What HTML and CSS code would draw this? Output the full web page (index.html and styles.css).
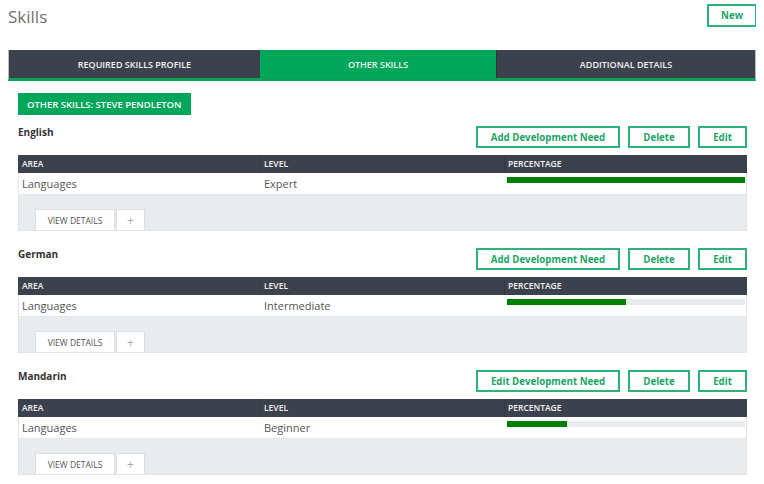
FILE: index.html
```html
<!DOCTYPE html>
<html>
<head>
<meta charset="utf-8">
<link rel="stylesheet" href="styles.css">
</head>
<body>
<div class="top">
  <h1 class="title">Skills</h1>
  <button class="btn btn-new">New</button>
</div>
<div class="tabs">
  <div class="tab tab-1">REQUIRED SKILLS PROFILE</div>
  <div class="tab tab-2 active">OTHER SKILLS</div>
  <div class="tab tab-3">ADDITIONAL DETAILS</div>
</div>
<div class="content">
  <div class="person">OTHER SKILLS: STEVE PENDLETON</div>

  <div class="skill">
    <div class="skill-head">
      <div class="skill-name">English</div>
      <div class="actions">
        <button class="btn btn-dev">Add Development Need</button>
        <button class="btn btn-del">Delete</button>
        <button class="btn btn-edit">Edit</button>
      </div>
    </div>
    <div class="table">
      <div class="row head"><div class="cell">AREA</div><div class="cell">LEVEL</div><div class="cell">PERCENTAGE</div></div>
      <div class="row body"><div class="cell">Languages</div><div class="cell">Expert</div><div class="cell bar-cell"><div class="bar"><div class="fill" style="width:100%"></div></div></div></div>
      <div class="foot"><button class="sm">VIEW DETAILS</button><button class="sm plus">+</button></div>
    </div>
  </div>

  <div class="skill">
    <div class="skill-head">
      <div class="skill-name">German</div>
      <div class="actions">
        <button class="btn btn-dev">Add Development Need</button>
        <button class="btn btn-del">Delete</button>
        <button class="btn btn-edit">Edit</button>
      </div>
    </div>
    <div class="table">
      <div class="row head"><div class="cell">AREA</div><div class="cell">LEVEL</div><div class="cell">PERCENTAGE</div></div>
      <div class="row body"><div class="cell">Languages</div><div class="cell">Intermediate</div><div class="cell bar-cell"><div class="bar"><div class="fill" style="width:50%"></div></div></div></div>
      <div class="foot"><button class="sm">VIEW DETAILS</button><button class="sm plus">+</button></div>
    </div>
  </div>

  <div class="skill">
    <div class="skill-head">
      <div class="skill-name">Mandarin</div>
      <div class="actions">
        <button class="btn btn-dev">Edit Development Need</button>
        <button class="btn btn-del">Delete</button>
        <button class="btn btn-edit">Edit</button>
      </div>
    </div>
    <div class="table">
      <div class="row head"><div class="cell">AREA</div><div class="cell">LEVEL</div><div class="cell">PERCENTAGE</div></div>
      <div class="row body"><div class="cell">Languages</div><div class="cell">Beginner</div><div class="cell bar-cell"><div class="bar"><div class="fill" style="width:25%"></div></div></div></div>
      <div class="foot"><button class="sm">VIEW DETAILS</button><button class="sm plus">+</button></div>
    </div>
  </div>
</div>
</body>
</html>
```
FILE: styles.css
```css
* { box-sizing: border-box; }
html, body { margin: 0; padding: 0; background: #fff; }
body {
  margin: 0 8px;
  font-family: "Open Sans", "Noto Sans", sans-serif;
  color: #444;
  overflow: hidden;
  height: 484px;
}
.top {
  display: flex;
  justify-content: space-between;
  align-items: flex-start;
  padding-top: 4px;
  height: 50px;
}
.title {
  margin: 1px 0 0 0;
  font-size: 17px;
  font-weight: 400;
  color: #707070;
  line-height: 24px;
}
.btn {
  font-family: inherit;
  background: #fff;
  border: 2px solid #2cb27a;
  color: #1ca566;
  font-weight: 700;
  font-size: 9.7px;
  height: 22px;
  padding: 0;
  cursor: pointer;
  white-space: nowrap;
}
.btn-new { width: 50px; height: 23px; margin-right: -1px; }
.tabs {
  display: flex;
  height: 31px;
  background: #3c424d;
  border-left: 1px solid #b9bdc3;
  border-right: 1px solid #b9bdc3;
  border-bottom: 3px solid #0ba25a;
}
.tab {
  display: flex;
  align-items: center;
  justify-content: center;
  color: #f2f2f2;
  font-size: 9px;
  font-weight: 600;
}
.tab-1 { width: 251px; }
.tab-2 { width: 236px; }
.tab-3 { flex: 1; border-left: 1px solid #2e333b; }
.tab.active { background: #00a65a; }
.content { padding: 12px 9px 0 10px; }
.person {
  display: flex;
  align-items: center;
  width: fit-content;
  height: 22px;
  padding: 0 9px;
  background: #00a65a;
  color: #fff;
  font-size: 9.5px;
  font-weight: 600;
  white-space: nowrap;
}
.skill { margin-top: 11px; }
.skill + .skill { margin-top: 17px; }
.skill-head {
  display: flex;
  justify-content: space-between;
  height: 22px;
}
.skill-name {
  font-size: 10px;
  font-weight: 700;
  color: #333;
  line-height: 12px;
}
.actions { display: flex; gap: 8px; }
.btn-dev { width: 144px; }
.btn-del { width: 62px; }
.btn-edit { width: 49px; }
.table {
  margin-top: 7px;
  border: 1px solid #e2e5e8;
  border-top: 0;
}
.row { display: grid; grid-template-columns: 242px 244px 1fr; }
.row.head {
  background: #3c424d;
  height: 18px;
  margin: 0 -1px;
}
.head .cell {
  color: #f2f2f2;
  font-size: 8.5px;
  font-weight: 600;
  line-height: 18px;
  padding-left: 4px;
}
.head .cell + .cell { border-left: 1px solid #343941; padding-left: 3px; }
.row.body { height: 22px; background: #fff; border-bottom: 1px solid #e4e7ea; }
.body .cell {
  font-size: 11px;
  color: #555;
  line-height: 22px;
  padding-left: 3px;
}
.body .bar-cell { padding: 4px 1px 0 2px; }
.bar { height: 6px; background: #e8ebee; }
.fill { height: 100%; background: #008000; }
.foot {
  background: #e9ecef;
  height: 35px;
  padding: 14px 0 0 16px;
  display: flex;
  gap: 1px;
  align-items: flex-start;
}
.sm {
  font-family: inherit;
  background: #fff;
  border: 1px solid #dcdfe2;
  border-bottom: 0;
  height: 21px;
  width: 80px;
  font-size: 8.5px;
  color: #555;
  padding: 0;
}
.sm.plus { width: 29px; font-size: 12px; color: #aaa; }
```
